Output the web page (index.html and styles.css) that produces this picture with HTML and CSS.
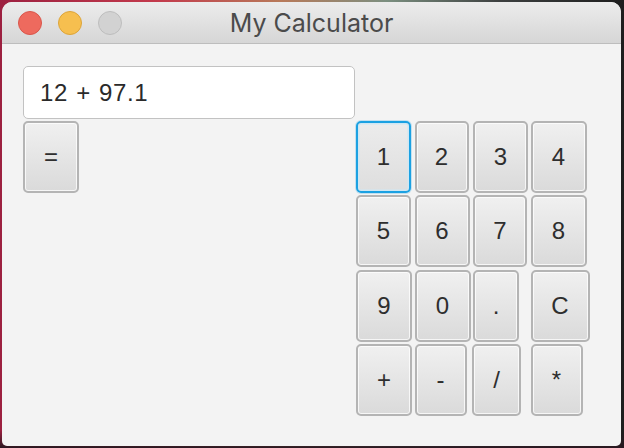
FILE: index.html
```html
<!DOCTYPE html>
<html>
<head>
<meta charset="utf-8">
<link rel="stylesheet" href="styles.css">
</head>
<body>
<div class="window">
  <div class="titlebar">
    <div class="lights">
      <span class="light red"></span>
      <span class="light yellow"></span>
      <span class="light gray"></span>
    </div>
    <div class="title">My Calculator</div>
    <div class="spacer"></div>
  </div>
  <div class="content">
    <div class="field">12 + 97.1</div>
    <div class="eq-cell"><button class="key eq">=</button></div>
    <div class="keypad">
      <button class="key w55 focused">1</button>
      <button class="key w54">2</button>
      <button class="key w55">3</button>
      <button class="key w56">4</button>
      <button class="key w55">5</button>
      <button class="key w55">6</button>
      <button class="key w54">7</button>
      <button class="key w56">8</button>
      <button class="key w56">9</button>
      <button class="key w56">0</button>
      <button class="key w46">.</button>
      <button class="key w59">C</button>
      <button class="key w56">+</button>
      <button class="key w52">-</button>
      <button class="key w49 shift">/</button>
      <button class="key w52">*</button>
    </div>
  </div>
</div>
</body>
</html>
```

FILE: styles.css
```css
html, body {
  margin: 0;
  padding: 0;
}
body {
  width: 624px;
  height: 448px;
  overflow: hidden;
  background:
    linear-gradient(180deg, rgba(0,0,0,0) 0%, rgba(0,0,0,0) 96%, #2a1820 100%),
    linear-gradient(90deg, #9c2040 0%, #c33a4c 25%, #b87a5a 45%, #7b8f80 62%, #3d4040 80%, #1e1e1e 100%);
}
.window {
  margin: 2px 0 0 2px;
  width: 619px;
  height: 444px;
  border-radius: 10px 10px 5px 5px;
  overflow: hidden;
  background: #f3f3f3;
  display: flex;
  flex-direction: column;
}
.titlebar {
  height: 41px;
  border-bottom: 1px solid #bdbdbd;
  background: linear-gradient(180deg, #ececec 0%, #d6d6d6 100%);
  display: grid;
  grid-template-columns: 1fr auto 1fr;
  align-items: center;
}
.lights {
  display: flex;
  gap: 16px;
  padding-left: 16px;
}
.light {
  width: 24px;
  height: 24px;
  border-radius: 50%;
  box-sizing: border-box;
}
.red { background: #ee6a5e; border: 1px solid #d9564b; }
.yellow { background: #f6bf4f; border: 1px solid #dca43a; }
.gray { background: #d2d2d2; border: 1px solid #bdbdbd; }
.title {
  font-family: "Inter", "Roboto", sans-serif;
  font-size: 25px;
  color: #4b4b4b;
  padding-top: 1px;
}
.content {
  padding: 22px 0 0 21px;
  display: grid;
  grid-template-columns: 332px auto;
  grid-template-rows: 53px auto;
  column-gap: 1px;
  row-gap: 2px;
  align-items: start;
}
.field {
  grid-column: 1 / 2;
  grid-row: 1;
  height: 53px;
  box-sizing: border-box;
  background: #ffffff;
  border: 1.5px solid #c2c2c2;
  border-radius: 5px;
  padding-left: 16px;
  display: flex;
  align-items: center;
  font-family: "Liberation Sans", Arial, sans-serif;
  font-size: 24px;
  color: #2a2a2a;
  white-space: pre;
  word-spacing: 1px;
  letter-spacing: 0.6px;
}
.eq-cell {
  grid-column: 1;
  grid-row: 2;
}
.keypad {
  grid-column: 2;
  grid-row: 2;
  display: grid;
  grid-template-columns: 56px 56px 55px 59px;
  grid-auto-rows: 72px;
  column-gap: 2.5px;
  row-gap: 2.3px;
}
.key {
  box-sizing: border-box;
  height: 72px;
  margin: 0;
  padding: 0;
  border: 2px solid #b4b4b4;
  border-radius: 5px;
  background: linear-gradient(180deg, #f0f0f0 0%, #dadada 100%);
  box-shadow: inset 0 0 0 1px rgba(255,255,255,0.75);
  font-family: "Liberation Sans", Arial, sans-serif;
  font-size: 24px;
  color: #2e2e2e;
  display: flex;
  align-items: center;
  justify-content: center;
  justify-self: start;
}
.eq { width: 56px; }
.w46 { width: 46px; }
.w49 { width: 49px; }
.w52 { width: 52px; }
.w54 { width: 54px; }
.w55 { width: 55px; }
.w56 { width: 56px; }
.w59 { width: 59px; }
.shift { margin-left: -1px; }
.focused {
  border: 2px solid #1ba1e2;
  box-shadow: 0 0 0 1px rgba(27,161,226,0.22), inset 0 0 0 1.5px #cfe7f3;
  background: linear-gradient(180deg, #ececec 0%, #dedede 100%);
}
```
